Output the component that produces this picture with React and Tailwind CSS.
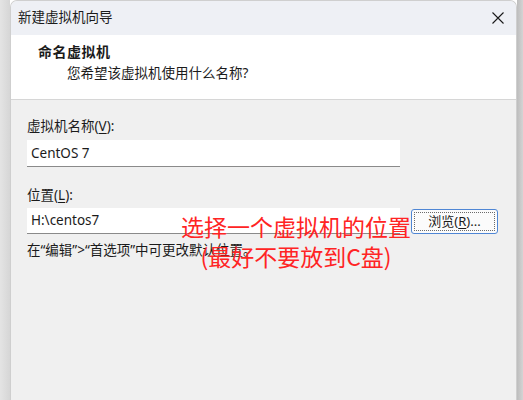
const FONT = { fontFamily: '"Noto Sans", "Noto Sans CJK SC", sans-serif' };

function CloseIcon() {
  return (
    <svg width="14" height="14" viewBox="0 0 14 14" className="block">
      <path d="M1.5 1.5 L12.5 12.5 M12.5 1.5 L1.5 12.5" stroke="#1a1a1a" strokeWidth="1.1" fill="none" />
    </svg>
  );
}

export default function App() {
  return (
    <div className="flex w-[523px] h-[400px] overflow-hidden text-[#1b1b1b]" style={FONT}>
      {/* desktop behind, left */}
      <div className="w-[10px] bg-gradient-to-r from-[#e4e4e4] to-[#d6d6d6]" />

      {/* dialog */}
      <div className="w-[507px] flex flex-col bg-[#f0f0f0] border-x border-t border-[#cfcfcf] rounded-t-[7px] overflow-hidden">
        {/* title bar */}
        <div className="h-[34px] shrink-0 flex items-center justify-between bg-[#eef0f5] pl-[7px] pr-[11px]">
          <span className="text-[13.5px] leading-none">新建虚拟机向导</span>
          <CloseIcon />
        </div>

        {/* header */}
        <div className="h-[65px] shrink-0 bg-white border-b border-[#d6d6d6] pl-[27px] pt-[8px]">
          <div className="text-[14px] font-bold leading-[18px] tracking-[0.5px]">命名虚拟机</div>
          <div className="text-[13.5px] leading-[18px] pl-[29px] mt-[3px]">您希望该虚拟机使用什么名称?</div>
        </div>

        {/* body */}
        <div className="relative flex-1 pl-[16px] pt-[17px]">
          <div className="text-[13.5px] leading-[18px]">
            虚拟机名称(<span className="underline underline-offset-2">V</span>):
          </div>
          <div className="mt-[5px] w-[373px] h-[27px] bg-white border-b border-[#8a8a8a] flex items-center pl-[4px] text-[13.5px]">
            CentOS 7
          </div>

          <div className="mt-[19px] text-[13.5px] leading-[18px]">
            位置(<span className="underline underline-offset-2">L</span>):
          </div>
          <div className="mt-[4px] flex items-center">
            <div className="w-[373px] h-[26px] bg-white border-b border-[#8a8a8a] flex items-center pl-[4px] text-[13.5px]">
              H:\centos7
            </div>
            <div className="ml-[11px] w-[87px] h-[25px] rounded-[3px] border border-[#4f86d4] bg-[#fbfbfb] p-[2px]">
              <div className="h-full border border-dotted border-[#6b6b6b] flex items-center justify-center text-[13px] leading-none">
                浏览(<span className="underline underline-offset-2">R</span>)...
              </div>
            </div>
          </div>

          <div className="mt-[7px] text-[13.5px] leading-[18px]">在“编辑”&gt;“首选项”中可更改默认位置。</div>

          {/* red annotation */}
          <div className="absolute left-[170px] top-[111px] text-[#ff2424] text-[23px] leading-[30px] text-center" style={{ fontFamily: '"Noto Sans CJK SC", sans-serif' }}>
            <div>选择一个虚拟机的位置</div>
            <div>(最好不要放到C盘)</div>
          </div>
        </div>
      </div>

      {/* desktop behind, right */}
      <div className="flex-1 bg-gradient-to-r from-[#bdbdbd] to-[#d4d4d4]" />
    </div>
  );
}
